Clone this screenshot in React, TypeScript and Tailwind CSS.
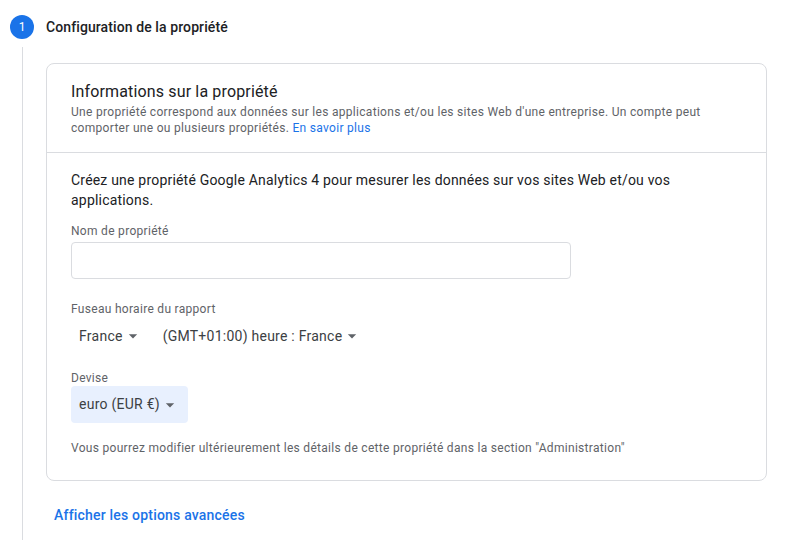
import React from "react";

function Caret() {
  return (
    <svg width="20" height="20" viewBox="0 0 24 24" className="shrink-0">
      <path d="M7 10l5 5 5-5z" fill="#5f6368" />
    </svg>
  );
}

export default function App() {
  return (
    <div
      className="h-[540px] w-[792px] overflow-hidden bg-white text-[#202124]"
      style={{ fontFamily: "Roboto, 'Noto Sans', Arial, sans-serif" }}
    >
      <div className="flex h-full pl-[10px] pt-[15px]">
        <div className="flex w-6 flex-col items-center">
          <div className="flex h-6 w-6 items-center justify-center rounded-full bg-[#1a73e8] text-[12px] text-white">
            1
          </div>
          <div className="mt-2 w-px flex-1 bg-[#dadce0]" />
        </div>
        <div className="ml-3 flex flex-col">
          <div className="flex h-6 items-center text-[14px] font-medium tracking-[0.1px] text-[#202124]">
            Configuration de la propriété
          </div>
          <div className="mt-6 w-[721px] rounded-lg border border-[#dadce0]">
            <div className="border-b border-[#dadce0] px-6 pb-4 pt-4">
              <div className="text-[16px] leading-6 tracking-[0.15px] text-[#202124]">
                Informations sur la propriété
              </div>
              <p className="text-[12px] leading-4 tracking-[0.3px] text-[#5f6368]">
                Une propriété correspond aux données sur les applications et/ou les sites Web d'une entreprise. Un compte peut comporter une ou plusieurs propriétés.{" "}
                <a className="text-[#1a73e8]">En savoir plus</a>
              </p>
            </div>
            <div className="px-6 pb-6 pt-[17px]">
              <div className="w-[640px] text-[14px] leading-5 tracking-[0.2px] text-[#202124]">
                Créez une propriété Google Analytics 4 pour mesurer les données sur vos sites Web et/ou vos applications.
              </div>
              <div className="mt-[13px] text-[12px] leading-4 tracking-[0.3px] text-[#5f6368]">
                Nom de propriété
              </div>
              <div className="mt-[3px] h-[37px] w-[500px] rounded border border-[#dadce0]" />
              <div className="mt-[22px] text-[12px] leading-4 tracking-[0.3px] text-[#5f6368]">
                Fuseau horaire du rapport
              </div>
              <div className="flex">
                <div className="flex h-[38px] items-center rounded px-2 text-[14px] tracking-[0.25px] text-[#3c4043]">
                  France
                  <Caret />
                </div>
                <div className="ml-1 flex h-[38px] items-center rounded px-2 text-[14px] tracking-[0.25px] text-[#3c4043]">
                  (GMT+01:00) heure : France
                  <Caret />
                </div>
              </div>
              <div className="mt-[15px] text-[12px] leading-4 tracking-[0.3px] text-[#5f6368]">
                Devise
              </div>
              <div className="flex">
                <div className="flex h-[37px] items-center rounded bg-[#e8f0fe] pl-2 pr-2 text-[14px] tracking-[0.25px] text-[#3c4043]">
                  euro (EUR €)
                  <Caret />
                </div>
              </div>
              <div className="mt-[17px] text-[12px] leading-4 tracking-[0.3px] text-[#5f6368]">
                Vous pourrez modifier ultérieurement les détails de cette propriété dans la section "Administration"
              </div>
            </div>
          </div>
          <div className="mt-4 flex h-9 items-center px-2 text-[14px] font-medium tracking-[0.2px] text-[#1a73e8]">
            Afficher les options avancées
          </div>
        </div>
      </div>
    </div>
  );
}
